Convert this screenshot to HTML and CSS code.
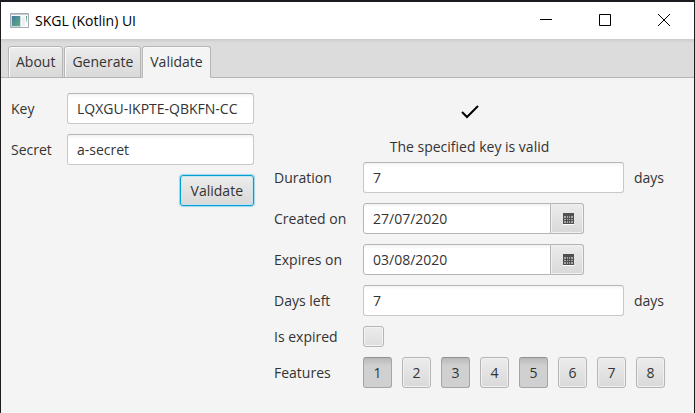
FILE: index.html
```html
<!DOCTYPE html>
<html lang="en">
<head>
<meta charset="utf-8">
<title>SKGL (Kotlin) UI</title>
<link rel="stylesheet" href="styles.css">
</head>
<body>
<svg class="defs" width="0" height="0" aria-hidden="true">
  <symbol id="calendar" viewBox="0 0 11 12">
    <path fill="#fff" d="M0 11h11v1H0z"/>
    <path fill="#505050" d="M0 0h11v11H0z"/>
    <path fill="#a8a8a8" d="M1 3h2v2H1zM4 3h1v2H4zM6 3h1v2H6zM8 3h2v2H8zM1 6h2v1H1zM4 6h1v1H4zM6 6h1v1H6zM8 6h2v1H8zM1 8h2v2H1zM4 8h1v2H4zM6 8h1v2H6zM8 8h2v2H8z"/>
  </symbol>
</svg>
<div class="window">
  <header class="titlebar">
    <svg class="app-icon" width="19" height="16" viewBox="0 0 19 16" aria-hidden="true">
      <defs><linearGradient id="pane" x1="0" y1="0" x2="1" y2="1"><stop offset="0" stop-color="#4479a0"/><stop offset="1" stop-color="#5fb07c"/></linearGradient>
      <linearGradient id="bar" x1="0" y1="0" x2="0" y2="1"><stop offset="0" stop-color="#4f9a8c"/><stop offset="1" stop-color="#b5dcb4"/></linearGradient></defs>
      <path fill="#fafbfc" stroke="#a5abb5" d="M.5.5h18v14H.5z"/>
      <path fill="#c3c8d0" d="M1 1h17v1H1z"/>
      <path fill="#cfd8dd" d="M1 3h10v11H1z"/>
      <path fill="url(#pane)" d="M2 3h8v10H2z"/>
      <path fill="#edf0f2" d="M12 4h3v9h-3z"/>
      <path fill="url(#bar)" d="M16 3h1v6h-1z"/>
    </svg>
    <h1 class="title">SKGL (Kotlin) UI</h1>
    <div class="controls">
      <button class="control" type="button" aria-label="Minimize"><svg width="12" height="12" viewBox="0 0 12 12"><path fill="#000" d="M0 5h12v1H0z"/></svg></button>
      <button class="control" type="button" aria-label="Maximize"><svg width="12" height="12" viewBox="0 0 12 12"><path fill="none" stroke="#000" d="M.5.5h11v11H.5z"/></svg></button>
      <button class="control" type="button" aria-label="Close"><svg width="12" height="12" viewBox="0 0 12 12"><path fill="none" stroke="#000" d="M0 0l12 12M12 0L0 12"/></svg></button>
    </div>
  </header>
  <nav class="tabs" role="tablist">
    <button class="tab" type="button" role="tab">About</button>
    <button class="tab" type="button" role="tab">Generate</button>
    <button class="tab tab-selected" type="button" role="tab" aria-selected="true">Validate</button>
  </nav>
  <main class="content">
    <form class="key-form">
      <label for="key">Key</label>
      <input class="field" id="key" type="text" value="LQXGU-IKPTE-QBKFN-CC">
      <label for="secret">Secret</label>
      <input class="field" id="secret" type="text" value="a-secret">
      <button class="button button-focused" type="button">Validate</button>
    </form>
    <section class="result">
      <div class="status">
        <svg width="18" height="14" viewBox="0 0 18 14" aria-hidden="true"><path fill="none" stroke="#000" stroke-width="2" d="M1 7l5 5L17 1"/></svg>
        <p class="message">The specified key is valid</p>
      </div>
      <div class="details">
        <label for="duration">Duration</label>
        <div class="row"><input class="field" id="duration" type="text" value="7"><span class="unit">days</span></div>
        <label for="created">Created on</label>
        <div class="date"><input class="field" id="created" type="text" value="27/07/2020"><button class="picker" type="button" aria-label="Pick creation date"><svg width="11" height="12"><use href="#calendar"/></svg></button></div>
        <label for="expires">Expires on</label>
        <div class="date"><input class="field" id="expires" type="text" value="03/08/2020"><button class="picker" type="button" aria-label="Pick expiry date"><svg width="11" height="12"><use href="#calendar"/></svg></button></div>
        <label for="left">Days left</label>
        <div class="row"><input class="field" id="left" type="text" value="7"><span class="unit">days</span></div>
        <label for="expired">Is expired</label>
        <input class="check" id="expired" type="checkbox">
        <span>Features</span>
        <div class="features">
          <button class="button toggle pressed" type="button" aria-pressed="true">1</button>
          <button class="button toggle" type="button">2</button>
          <button class="button toggle pressed" type="button" aria-pressed="true">3</button>
          <button class="button toggle" type="button">4</button>
          <button class="button toggle pressed" type="button" aria-pressed="true">5</button>
          <button class="button toggle" type="button">6</button>
          <button class="button toggle" type="button">7</button>
          <button class="button toggle" type="button">8</button>
        </div>
      </div>
    </section>
  </main>
</div>
</body>
</html>
```
FILE: styles.css
```css
* { box-sizing: border-box; }

body {
  margin: 0;
  color: #333;
  font: 14px/20px "Open Sans", "Noto Sans", sans-serif;
}

button, input { margin: 0; font: inherit; color: inherit; }
.defs { position: absolute; }

.window {
  display: flex;
  flex-direction: column;
  min-height: 100vh;
  background: #f4f4f4;
  border: 1px solid #1e1b20;
  border-top-width: 2px;
  border-bottom: 0;
}

.titlebar {
  display: flex;
  align-items: center;
  height: 37px;
  padding: 0 1px 0 9px;
  background: #fff;
  color: #000;
}

.title { flex: 1; margin: 0 0 0 6px; font-size: 14px; font-weight: 400; }
.controls { display: flex; align-self: stretch; }

.control {
  display: flex;
  align-items: center;
  justify-content: center;
  width: 59px;
  padding: 0 0 2px;
  border: 0;
  background: none;
}

.tabs {
  display: flex;
  gap: 1px;
  padding: 7px 7px 0;
  background: linear-gradient(#cbcbcb, #dcdcdc 4px);
  box-shadow: inset 0 -1px #b5b5b5;
}

.tab {
  height: 32px;
  padding: 0 7px;
  border: 1px solid #b5b5b5;
  border-radius: 3px 3px 0 0;
  background: linear-gradient(#ececec, #d9d9d9);
  box-shadow: inset 1px 1px #fafafa;
}

.tab-selected { border-bottom-color: #f4f4f4; background: #f4f4f4; }

.content {
  display: grid;
  grid-template-columns: 243fr 391fr;
  gap: 20px;
  align-items: start;
  padding: 15px 29px 15px 10px;
}

.key-form {
  display: grid;
  grid-template-columns: 46px 1fr;
  gap: 10px;
  align-items: center;
}

.field {
  width: 100%;
  min-width: 0;
  height: 31px;
  padding: 0 9px;
  border: 1px solid #c8c8c8;
  border-top-color: #b5b5b5;
  border-radius: 3px;
  background: linear-gradient(#f3f3f3, #fff 4px);
}

.button {
  height: 31px;
  padding: 0 10px;
  border: 1px solid #b5b5b5;
  border-radius: 3px;
  background: linear-gradient(#ececec, #d9d9d9);
  box-shadow: inset 0 0 0 1px #f0f0f0;
}

.button-focused {
  grid-column: 2;
  justify-self: end;
  border-color: #039ed3;
  box-shadow: 0 0 1px 1px #9fd6ea, inset 0 0 0 1px #c5e5f0;
}

.status {
  display: flex;
  flex-direction: column;
  align-items: center;
  gap: 18px;
  padding: 12px 0 5px;
}

.message { margin: 0; }

.details {
  display: grid;
  grid-template-columns: 79px 1fr;
  gap: 10px;
  align-items: center;
}

.row { display: flex; align-items: center; gap: 10px; }
.unit { flex: none; width: 31px; }
.date { display: flex; width: 221px; }
.date .field { flex: 1; border-color: #b5b5b5; border-radius: 3px 0 0 3px; }

.picker {
  display: flex;
  align-items: center;
  justify-content: center;
  width: 33px;
  padding: 0 0 0 2px;
  border: 1px solid #b5b5b5;
  border-left: 0;
  border-radius: 0 3px 3px 0;
  background: linear-gradient(#ececec, #d9d9d9);
  box-shadow: inset 0 0 0 1px #f0f0f0;
}

.check {
  appearance: none;
  width: 21px;
  height: 21px;
  border: 1px solid #b5b5b5;
  border-radius: 3px;
  background: linear-gradient(#ececec, #dedede);
  box-shadow: inset 0 0 0 1px #f4f4f4;
}

.features { display: grid; grid-template-columns: repeat(8, 1fr); gap: 10px; }
.toggle { padding: 0; }

.pressed {
  border-color: #a5a5a5;
  border-top-color: #909090;
  background: linear-gradient(#b9b9b9, #d0d0d0 8px);
  box-shadow: none;
}
```
